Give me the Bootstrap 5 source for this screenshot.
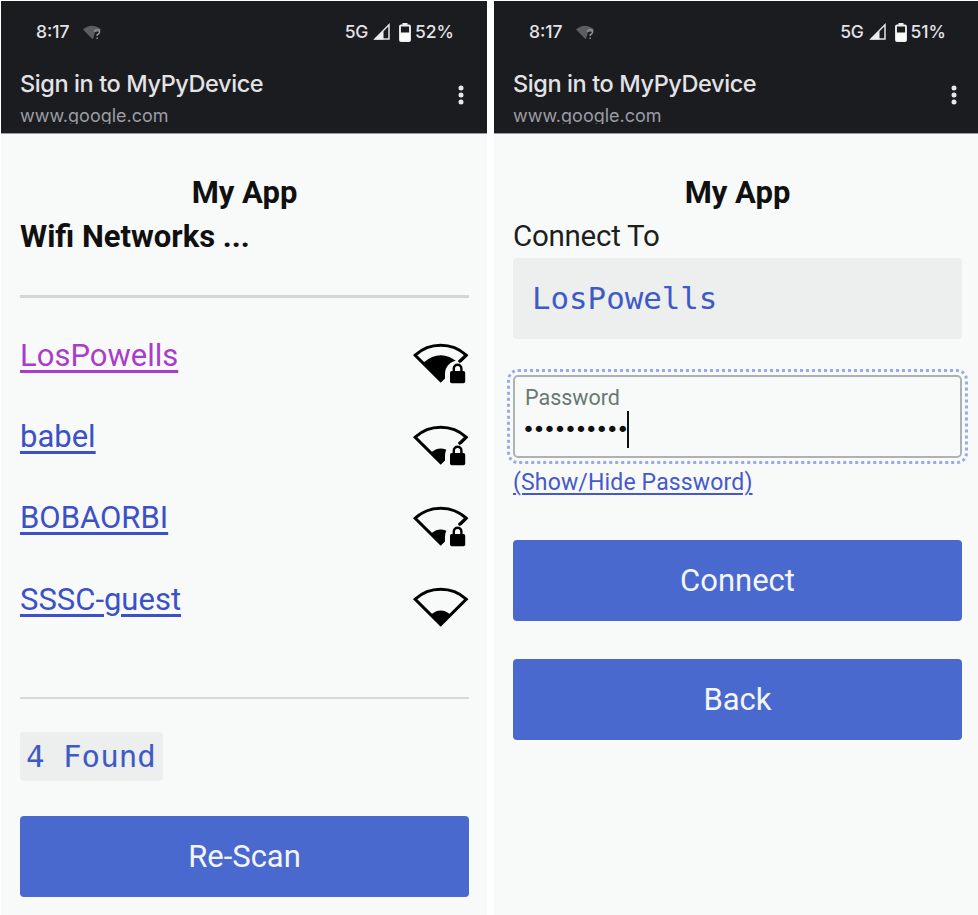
<!DOCTYPE html>
<html lang="en">
<head>
<meta charset="utf-8">
<meta name="viewport" content="width=device-width, initial-scale=1">
<title>My App</title>
<link href="https://cdn.jsdelivr.net/npm/bootstrap@5.3.0/dist/css/bootstrap.min.css" rel="stylesheet">
<style>
body{background:#fff;font-family:Roboto,"Liberation Sans",sans-serif;width:978px;height:915px;overflow:hidden;color:#101010}
.screens{gap:7px;padding:1px 0 0 1px;height:915px}
.phone{width:486px;background:#f8faf9;flex:none}
.phone-end{width:484px}
.topbar{height:133px;background:#1b1c20;color:#e3e3e6;font-family:Inter,sans-serif;border-bottom:1px solid #9a9c9d;white-space:nowrap}
.status{height:62px;padding:0 33px 0 35px;font-size:17.5px;font-weight:500}
.phone-end .status{padding-right:32px}
.clock{width:47px}
.net-type{letter-spacing:-.3px}
.ttl{font-size:23.5px;line-height:30px;padding-left:19px;padding-top:6px;height:41px;font-weight:500;letter-spacing:-.4px}
.host{font-size:18px;line-height:24px;height:20px;overflow:hidden;color:#9b9ca4;padding-left:19px}
.kebab{margin:3px 23px 0 0}
.phone-end .kebab{margin-right:21px}
.main{padding:37px 18px 0 19px}
.phone-end .main{padding-right:16px}
.heading{font-size:31px;line-height:45px;font-weight:700;margin:0}
.heading.center{text-align:center;line-height:43px}
.subtitle{font-size:29.5px;line-height:45px;height:44px;letter-spacing:-.25px;color:#1d1f1e}
.rule{height:3px;background:#d0d7d5}
.rule-first{margin-top:36px}
.rule-last{height:2px;background:#d3dad8}
.nets{margin:17px 0 56px}
.net{height:81.4px}
.net a{font-size:31px;line-height:40px;color:#3c51c8;text-underline-offset:4px;text-decoration-thickness:2.5px}
.net a.seen{color:#ab3bc9}
.net svg{margin-top:16px}
.mono{font-family:"DejaVu Sans Mono",monospace;font-size:30.8px;color:#3d5bc6;background:#edeeee;border-radius:4px}
.count{height:49px;line-height:48px;width:143px;padding-left:6px;margin:33px 0 35px}
.net-name{height:81px;line-height:81px;padding-left:19px;margin-bottom:36px}
.act{display:block;width:100%;height:81px;border:0;border-radius:4px;background:#4969cf;color:#f3f5fc;font-size:31px;line-height:79px;padding:0}
.act + .act{margin-top:38px}
.act:hover{background:#3f5dc0;color:#fff}
.field{height:83px;border:2px solid #abb4b2;border-radius:5px;outline:3px dotted #98aae8;outline-offset:3px;padding:8px 10px}
.field-label{font-size:21.5px;line-height:26px;color:#697873}
.secret{font-family:"DejaVu Sans",sans-serif;font-size:22px;letter-spacing:-2.5px;margin-left:-3px;height:37px;line-height:37px;border-right:2px solid #111;width:107px;white-space:nowrap}
.toggle{font-size:23px;line-height:30px;letter-spacing:.15px;color:#4659cc;display:block;margin:10px 0 42px;text-underline-offset:3px;text-decoration-thickness:2px}
</style>
<script src="https://cdn.jsdelivr.net/npm/bootstrap@5.3.0/dist/js/bootstrap.bundle.min.js"></script>
</head>
<body>
<svg width="0" height="0" class="position-absolute" aria-hidden="true">
  <defs>
    <g id="fan"><path d="M3.200 13.200A38 38 0 0 1 54.200 13.200L28.700 38.600Z" fill="none" stroke="#000" stroke-width="3"/></g>
    <g id="lock"><path d="M33 43V32a13 13 0 0 1 12.500-13.200L58 24V43Z" fill="#f8faf9"/><path d="M46.800 20.200L54.200 13.200" stroke="#000" stroke-width="3"/><rect x="38" y="29" width="15.200" height="12.200" rx="1.800"/><path d="M41.800 30V26.600a3.800 3.800 0 0 1 7.600 0V30" fill="none" stroke="#000" stroke-width="2.400"/></g>
    <g id="weak"><path d="M18.700 28.800Q28.700 20 38.700 28.800L28.700 39Z"/></g>
    <g id="noNet"><path d="M0 4.500Q9 -3 18 4.500L16 7L12 7L10 14L8.800 13.500Z" fill="#5c5d60"/><path d="M11.600 6.800Q12 4.600 14.300 4.700Q17 5 16.500 7.400Q16.100 8.600 14.200 9.800V11M14.200 12.600V14" fill="none" stroke="#929397" stroke-width="1.500"/></g>
    <g id="signal"><path d="M3 16L17 1.800V16Z" fill="none" stroke="#e3e3e6" stroke-width="1.500"/><path d="M2 16.500L11.500 8V16.500Z" fill="#eee"/></g>
    <g id="battery"><path d="M3.500 0h5v2h-5z" fill="#eee"/><rect x="1" y="2.500" width="10" height="15.500" rx="1" fill="none" stroke="#eee" stroke-width="1.900"/><path d="M1 9.500h10v8H1z" fill="#fff"/></g>
    <g id="dots" fill="#e8e8ea"><circle cx="3" cy="3" r="2.500"/><circle cx="3" cy="10" r="2.500"/><circle cx="3" cy="17" r="2.500"/></g>
  </defs>
</svg>
<div class="screens d-flex">
  <section class="phone">
    <header class="topbar">
      <div class="status d-flex align-items-center">
        <span class="clock">8:17</span><svg width="19" height="15"><use href="#noNet"/></svg>
        <span class="ms-auto net-type">5G</span><svg class="ms-1" width="19" height="18"><use href="#signal"/></svg><svg class="ms-2" width="12" height="19"><use href="#battery"/></svg><span class="ms-1">52%</span>
      </div>
      <div class="d-flex justify-content-between align-items-center">
        <div><div class="ttl">Sign in to MyPyDevice</div><div class="host">www.google.com</div></div>
        <svg class="kebab" width="6" height="20"><use href="#dots"/></svg>
      </div>
    </header>
    <main class="main">
      <h1 class="heading center">My App</h1>
      <h2 class="heading">Wifi Networks ...</h2>
      <div class="rule rule-first"></div>
      <div class="nets">
        <div class="net d-flex justify-content-between align-items-center"><a class="seen" href="#">LosPowells</a><svg width="57" height="43"><use href="#fan"/><path d="M11.500 20.500Q28.700 6 46 20.500L28.700 39Z"/><use href="#lock"/></svg></div>
        <div class="net d-flex justify-content-between align-items-center"><a href="#">babel</a><svg width="57" height="43"><use href="#fan"/><use href="#weak"/><use href="#lock"/></svg></div>
        <div class="net d-flex justify-content-between align-items-center"><a href="#">BOBAORBI</a><svg width="57" height="43"><use href="#fan"/><use href="#weak"/><use href="#lock"/></svg></div>
        <div class="net d-flex justify-content-between align-items-center"><a href="#">SSSC-guest</a><svg width="57" height="43"><use href="#fan"/><use href="#weak"/></svg></div>
      </div>
      <div class="rule rule-last"></div>
      <div class="mono count">4 Found</div>
      <button class="btn act" type="button">Re-Scan</button>
    </main>
  </section>
  <section class="phone phone-end">
    <header class="topbar">
      <div class="status d-flex align-items-center">
        <span class="clock">8:17</span><svg width="19" height="15"><use href="#noNet"/></svg>
        <span class="ms-auto net-type">5G</span><svg class="ms-1" width="19" height="18"><use href="#signal"/></svg><svg class="ms-2" width="12" height="19"><use href="#battery"/></svg><span class="ms-1">51%</span>
      </div>
      <div class="d-flex justify-content-between align-items-center">
        <div><div class="ttl">Sign in to MyPyDevice</div><div class="host">www.google.com</div></div>
        <svg class="kebab" width="6" height="20"><use href="#dots"/></svg>
      </div>
    </header>
    <main class="main">
      <h1 class="heading center">My App</h1>
      <div class="subtitle">Connect To</div>
      <div class="mono net-name">LosPowells</div>
      <div class="field">
        <div class="field-label">Password</div>
        <div class="secret">••••••••••</div>
      </div>
      <a class="toggle" href="#">(Show/Hide Password)</a>
      <button class="btn act" type="button">Connect</button>
      <button class="btn act" type="button">Back</button>
    </main>
  </section>
</div>
</body>
</html>
